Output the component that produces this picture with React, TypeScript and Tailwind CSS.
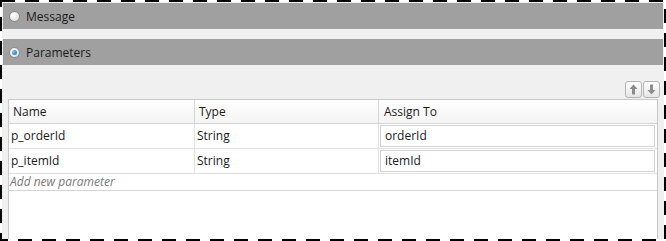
import React from 'react';

const font = { fontFamily: '"Open Sans", "Noto Sans", sans-serif' };

const rows = [
  { name: `p_orderId`, type: `String`, assign: `orderId` },
  { name: `p_itemId`, type: `String`, assign: `itemId` },
];

const Radio = ({ checked }: { checked: boolean }) => (
  <span className="flex h-[11px] w-[11px] items-center justify-center rounded-full border border-[#8a8a8a] bg-[radial-gradient(circle_at_35%_35%,#ffffff,#d8d8d8)]">
    {checked && (
      <span className="h-[5px] w-[5px] rounded-full bg-[radial-gradient(circle_at_35%_35%,#6fc3f0,#1a6fa8)]" />
    )}
  </span>
);

const SectionBar = ({ label, checked }: { label: string; checked: boolean }) => (
  <div className="flex h-[26px] items-center gap-[6px] bg-[#a0a0a0] pl-[6px]">
    <Radio checked={checked} />
    <span className="pt-[2px] text-[12px] text-[#1a1a1a]">{label}</span>
  </div>
);

const ArrowButton = ({ down }: { down?: boolean }) => (
  <button
    type="button"
    className="flex h-[17px] w-[17px] items-center justify-center rounded-[3px] border border-[#b4b4b4] bg-[linear-gradient(#ffffff,#e6e6e6)]"
  >
    <svg width="9" height="11" viewBox="0 0 9 11" className={down ? 'rotate-180' : ''}>
      <path d="M4.5 0.5 L8.5 5 L6 5 L6 10.5 L3 10.5 L3 5 L0.5 5 Z" fill="#8c8c8c" />
    </svg>
  </button>
);

export default function App() {
  return (
    <div className="relative h-[241px] w-[666px] bg-white p-[2px]" style={font}>
      <div className="flex h-full flex-col bg-[#f0f0f0] pt-[1px] pl-[1px] pr-[1px]">
        <SectionBar label="Message" checked={false} />
        <div className="h-[10px]" />
        <SectionBar label="Parameters" checked />
        <div className="flex justify-end gap-[1px] pt-[16px] pr-[3px] pb-[1px]">
          <ArrowButton />
          <ArrowButton down />
        </div>
        <div className="mx-[5px] flex flex-1 flex-col border border-b-0 border-[#c9c9c9] bg-white text-[12px] text-[#1a1a1a]">
          <div className="flex h-[24px] border-b border-[#d5d5d5] bg-[linear-gradient(#ffffff,#f4f4f4)]">
            <div className="flex w-[186px] items-center border-r border-[#d5d5d5] pt-[1px] pl-[4px]">Name</div>
            <div className="flex w-[184px] items-center border-r border-[#d5d5d5] pt-[1px] pl-[4px]">Type</div>
            <div className="flex flex-1 items-center pt-[1px] pl-[5px]">Assign To</div>
          </div>
          {rows.map((row) => (
            <div key={row.name} className="flex h-[25px] border-b border-[#e2e2e2]">
              <div className="flex w-[186px] items-center border-r border-[#e2e2e2] pl-[2px]">{row.name}</div>
              <div className="flex w-[184px] items-center border-r border-[#e2e2e2] pl-[2px]">{row.type}</div>
              <div className="flex flex-1 items-center py-[1px] pr-[2px] pl-[1px]">
                <div className="flex h-full w-full items-center border border-[#d4d4d4] pl-[4px]">
                  {row.assign}
                </div>
              </div>
            </div>
          ))}
          <div className="flex h-[17px] items-center border-b border-[#d5d5d5] pl-[1px] italic text-[#7a7a7a]">
            Add new parameter
          </div>
        </div>
      </div>
      <svg className="pointer-events-none absolute inset-0" width="666" height="241">
        <rect x="1" y="1" width="664" height="239" fill="none" stroke="#000" strokeWidth="2" strokeDasharray="14 10" />
      </svg>
    </div>
  );
}
